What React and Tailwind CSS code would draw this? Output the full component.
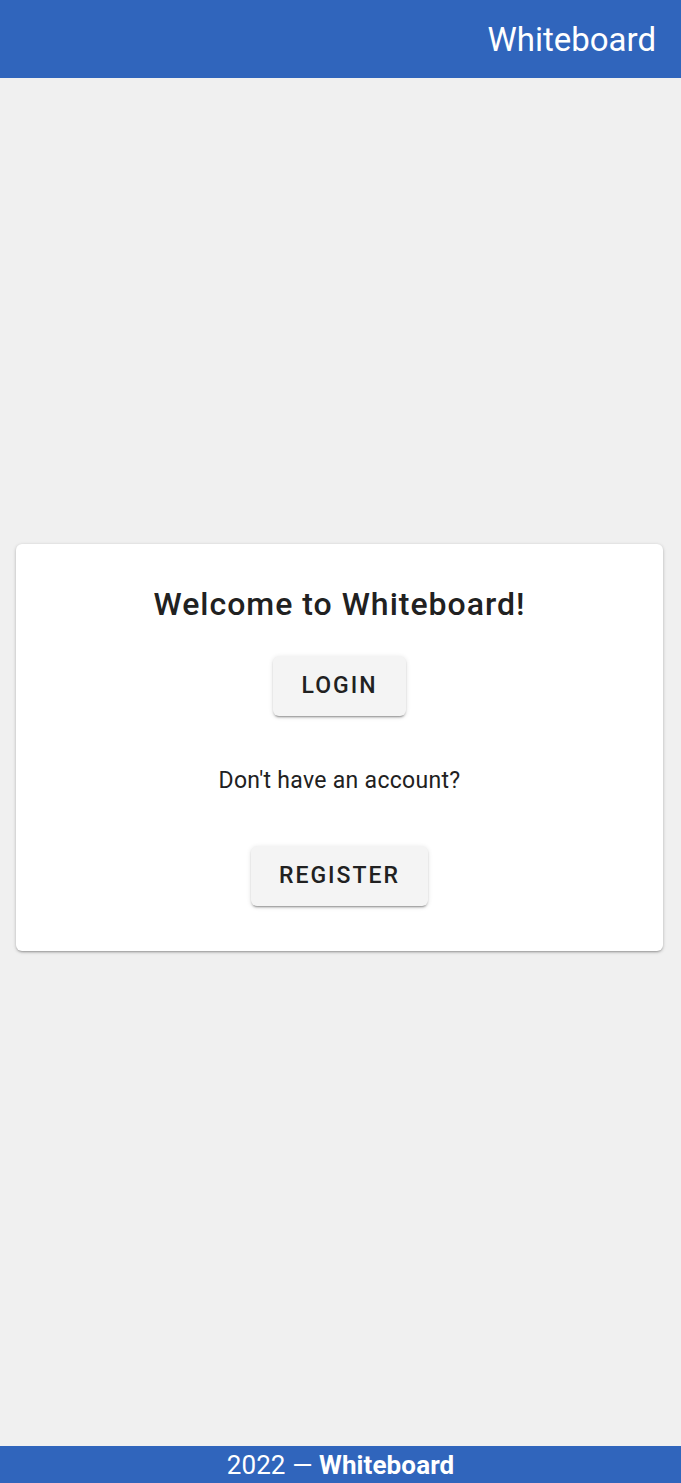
import React from 'react';

const font = { fontFamily: 'Roboto, "Liberation Sans", sans-serif' };

export default function App() {
    return (
        <div className="w-full h-screen flex flex-col bg-[#f0f0f0] text-[#212121]" style={font}>
            <header className="w-full h-[78px] shrink-0 bg-[#3065bc] flex justify-end items-center pr-[25px]">
                <div className="text-white text-[33px] leading-none">Whiteboard</div>
            </header>

            <main className="flex-1 flex flex-col justify-center pl-4 pr-[18px] pb-[29px]">
                <div className="w-full bg-white rounded-[6px] shadow-[0_2px_2px_-1px_rgba(0,0,0,0.2),0_1px_3px_0_rgba(0,0,0,0.14),0_1px_4px_0_rgba(0,0,0,0.12)] flex flex-col items-center pt-[42px] pb-[45px]">
                    <h1 className="text-[32px] leading-[36px] font-medium tracking-[1px]">Welcome to Whiteboard!</h1>
                    <button className="mt-[34px] h-[60px] px-[28px] rounded-[6px] bg-[#f4f4f4] text-[23px] font-medium tracking-[2px] uppercase shadow-[0_3px_1px_-2px_rgba(0,0,0,0.2),0_2px_2px_0_rgba(0,0,0,0.14),0_1px_5px_0_rgba(0,0,0,0.12)]">
                        Login
                    </button>
                    <p className="mt-[52px] text-[23px] leading-[26px] tracking-[0.3px]">Don't have an account?</p>
                    <button className="mt-[52px] h-[60px] px-[28px] rounded-[6px] bg-[#f4f4f4] text-[23px] font-medium tracking-[2px] uppercase shadow-[0_3px_1px_-2px_rgba(0,0,0,0.2),0_2px_2px_0_rgba(0,0,0,0.14),0_1px_5px_0_rgba(0,0,0,0.12)]">
                        Register
                    </button>
                </div>
            </main>

            <footer className="w-full h-[37px] shrink-0 bg-[#3065bc] flex justify-center items-center text-white text-[26px] leading-none tracking-[0.1px]">
                <span>2022 — <b className="font-bold">Whiteboard</b></span>
            </footer>
        </div>
    );
}
